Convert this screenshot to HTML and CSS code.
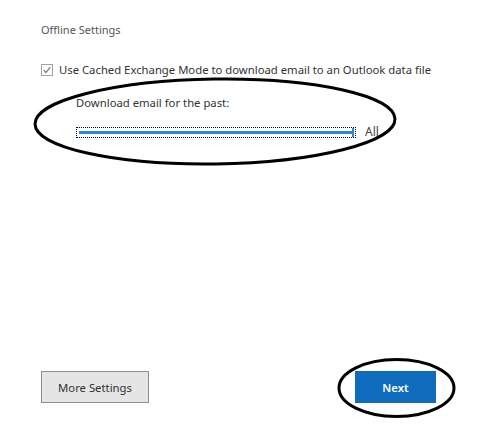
FILE: index.html
```html
<!DOCTYPE html>
<html>
<head>
<meta charset="utf-8">
<link rel="stylesheet" href="styles.css">
</head>
<body>
<div class="page">
  <div class="title">Offline Settings</div>
  <label class="check-row">
    <span class="checkbox">
      <svg width="12" height="12" viewBox="0 0 12 12"><rect x="0.5" y="0.5" width="11" height="11" fill="#fff" stroke="#a0a0a0"/><path d="M2.6 6.2 L4.9 8.5 L9.4 3.2" fill="none" stroke="#7a7a7a" stroke-width="1.2"/></svg>
    </span>
    <span class="check-label">Use Cached Exchange Mode to download email to an Outlook data file</span>
  </label>
  <div class="sub">
    <div class="sub-label">Download email for the past:</div>
    <div class="slider-row">
      <div class="slider">
        <div class="track"></div>
        <div class="thumb"></div>
      </div>
      <span class="slider-value">All</span>
    </div>
  </div>
  <div class="spacer"></div>
  <div class="buttons">
    <button class="btn btn-secondary">More Settings</button>
    <button class="btn btn-primary">Next</button>
  </div>
</div>
<svg class="annotations" width="479" height="442" viewBox="0 0 479 442">
  <ellipse cx="215" cy="121.5" rx="180" ry="42.5" fill="none" stroke="#000" stroke-width="3" transform="rotate(-0.8 215 121.5)"/>
  <ellipse cx="396.5" cy="388" rx="57.5" ry="28.5" fill="none" stroke="#000" stroke-width="3"/>
</svg>
</body>
</html>
```
FILE: styles.css
```css
html, body {
  margin: 0;
  padding: 0;
  background: #fff;
}
body {
  font-family: "Noto Sans", "Open Sans", sans-serif;
  font-size: 11.3px;
  color: #333;
  width: 479px;
  height: 442px;
  position: relative;
  overflow: hidden;
}
.page {
  display: flex;
  flex-direction: column;
  height: 442px;
  padding: 22px 0 0 41px;
  box-sizing: border-box;
}
.title {
  font-size: 11px;
  line-height: 16px;
  color: #555;
}
.check-row {
  display: flex;
  align-items: center;
  gap: 6px;
  margin-top: 24px;
  height: 16px;
}
.checkbox {
  display: flex;
  width: 12px;
  height: 12px;
}
.check-label {
  font-size: 11.3px;
  line-height: 16px;
  color: #333;
  white-space: nowrap;
}
.sub {
  padding-left: 35px;
  margin-top: 17px;
}
.sub-label {
  font-size: 11.3px;
  line-height: 16px;
  color: #333;
}
.slider-row {
  display: flex;
  align-items: center;
  gap: 9px;
  margin-top: 13px;
}
.slider {
  width: 280px;
  height: 11px;
  box-sizing: border-box;
  border: 1px dotted #000;
  display: flex;
  align-items: center;
  padding-left: 2px;
}
.track {
  width: 273px;
  height: 3px;
  background: #2b88d8;
}
.thumb {
  width: 2px;
  height: 9px;
  background: #2b88d8;
}
.slider-value {
  font-size: 12px;
  line-height: 16px;
  color: #444;
}
.spacer {
  flex: 1;
}
.buttons {
  display: flex;
  justify-content: space-between;
  width: 395px;
  margin-bottom: 39px;
}
.btn {
  height: 32px;
  font-family: "Noto Sans", "Open Sans", sans-serif;
  font-size: 11.3px;
  box-sizing: border-box;
  padding: 0;
  margin: 0;
}
.btn-secondary {
  width: 108px;
  background: #e5e5e5;
  border: 1px solid #8f8f8f;
  color: #333;
}
.btn-primary {
  width: 81px;
  background: #0f6cbd;
  border: 1px solid #0f6cbd;
  color: #fff;
  font-weight: 600;
}
.annotations {
  position: absolute;
  left: 0;
  top: 0;
  pointer-events: none;
}
```
